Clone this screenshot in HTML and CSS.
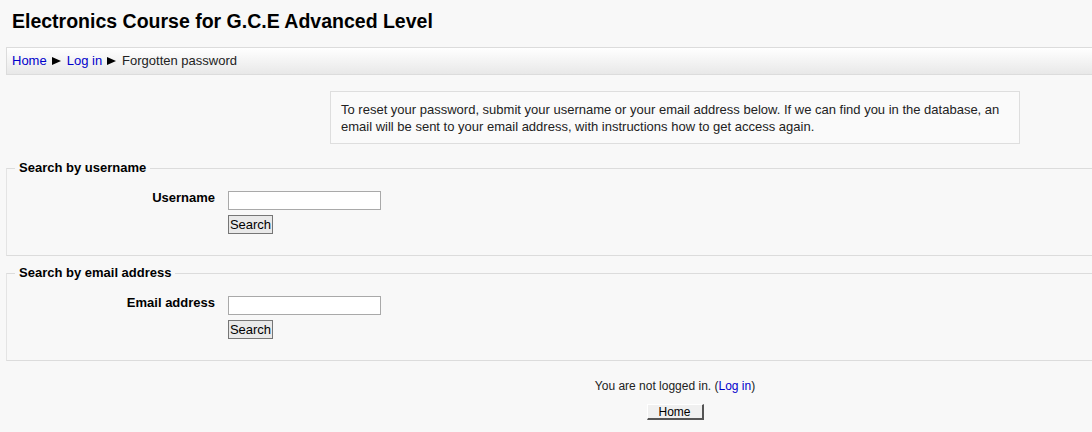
FILE: index.html
```html
<!DOCTYPE html>
<html>
<head>
<meta charset="utf-8">
<title>Forgotten password</title>
<link rel="stylesheet" href="styles.css">
</head>
<body>
<div class="page">
  <h1 class="title">Electronics Course for G.C.E Advanced Level</h1>
  <div class="navbar">
    <a href="#">Home</a><span class="sep"></span><a href="#">Log in</a><span class="sep"></span><span>Forgotten password</span>
  </div>
  <div class="content">
    <div class="intro-wrap">
      <div class="intro">To reset your password, submit your username or your email address below. If we can find you in the database, an email will be sent to your email address, with instructions how to get access again.</div>
    </div>
    <fieldset class="group">
      <legend>Search by username</legend>
      <div class="row">
        <label class="lbl">Username</label>
        <div class="fields">
          <input class="txt" type="text">
          <button class="btn">Search</button>
        </div>
      </div>
    </fieldset>
    <fieldset class="group">
      <legend>Search by email address</legend>
      <div class="row">
        <label class="lbl">Email address</label>
        <div class="fields">
          <input class="txt" type="text">
          <button class="btn">Search</button>
        </div>
      </div>
    </fieldset>
  </div>
  <div class="footer">
    <div class="logininfo">You are not logged in. (<a href="#">Log in</a>)</div>
    <button class="homebtn">Home</button>
  </div>
</div>
</body>
</html>
```
FILE: styles.css
```css
html {
  overflow: hidden;
}
body {
  margin: 0;
  background: #f8f8f8;
  font-family: "Liberation Sans", Arial, sans-serif;
  font-size: 13px;
  color: #000;
}
.page {
  width: 1338px;
  padding: 0 6px;
}
a {
  color: #0000cc;
  text-decoration: none;
}
.title {
  margin: 0;
  padding: 9px 0 0 6px;
  height: 38px;
  box-sizing: border-box;
  font-size: 19.5px;
  font-weight: bold;
  line-height: 24px;
}
.navbar {
  margin-top: 9px;
  height: 28px;
  box-sizing: border-box;
  border: 1px solid #dcdcdc;
  border-right: none;
  background: linear-gradient(#ffffff, #e8e8e8);
  padding: 5px 0 0 5px;
  line-height: 16px;
  color: #222;
}
.sep {
  display: inline-block;
  width: 0;
  height: 0;
  border-left: 9px solid #000;
  border-top: 4.5px solid transparent;
  border-bottom: 4.5px solid transparent;
  margin: 0 6px 0 5px;
  vertical-align: 0px;
}
.content {
  padding-top: 16px;
}
.intro-wrap {
  display: flex;
  justify-content: center;
}
.intro {
  width: 690px;
  box-sizing: border-box;
  border: 1px solid #dedede;
  background: #fafafa;
  padding: 9px 10px 8px 10px;
  font-size: 13px;
  line-height: 17px;
  color: #222;
}
.group {
  margin: 16px 0 0 0;
  padding: 0;
  border: none;
  border-top: 1px solid #dcdcdc;
  border-bottom: 1px solid #dcdcdc;
  border-left: 1px solid #e4e4e4;
  height: 96px;
  box-sizing: border-box;
  min-width: 0;
}
.group + .group {
  margin-top: 9px;
}
.group legend {
  font-weight: bold;
  padding: 0 4px;
  margin-left: 8px;
  line-height: 16px;
}
.row {
  display: flex;
  padding-top: 14px;
}
.lbl {
  width: 208px;
  text-align: right;
  font-weight: bold;
  padding-top: 0;
  line-height: 15px;
}
.fields {
  margin-left: 13px;
  display: flex;
  flex-direction: column;
  align-items: flex-start;
}
.txt {
  width: 153px;
  height: 19px;
  box-sizing: border-box;
  margin: 1px 0 0 0;
  border: 1px solid #a9a9a9;
  background: #fff;
  padding: 0 2px;
  font: 13px "Liberation Sans", Arial, sans-serif;
}
.btn {
  margin-top: 5px;
  width: 45px;
  height: 19px;
  box-sizing: border-box;
  padding: 0;
  border: 1px solid #767676;
  border-radius: 0;
  background: #e9e9e9;
  font: 13px "Liberation Sans", Arial, sans-serif;
  color: #000;
  line-height: 15px;
}
.footer {
  text-align: center;
  padding-top: 18px;
  color: #222;
  font-size: 12px;
}
.logininfo {
  line-height: 14px;
}
.homebtn {
  margin-top: 11px;
  width: 57px;
  height: 16px;
  box-sizing: border-box;
  padding: 0;
  border-top: 1px solid #fff;
  border-left: 1px solid #fff;
  border-right: 2px solid #555;
  border-bottom: 2px solid #555;
  background: #f0f0f0;
  font: 12px "Liberation Sans", Arial, sans-serif;
  color: #000;
  line-height: 12px;
}
```
